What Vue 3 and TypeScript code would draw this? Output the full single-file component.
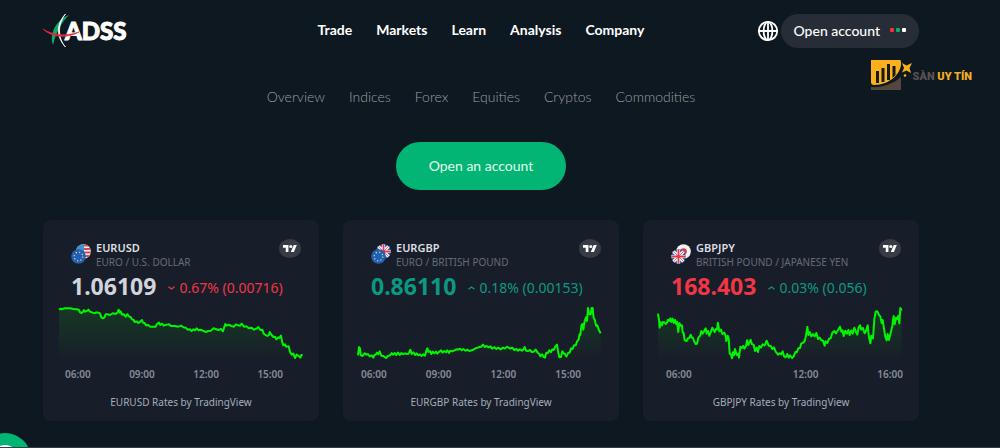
<script setup lang="ts">
type Trend = 'up' | 'down' | 'flat'

interface Tick {
  label: string
  span: number
}

interface Quote {
  symbol: string
  description: string
  front: 'eu' | 'gb'
  back: 'us' | 'gb' | 'jp'
  price: string
  priceTrend: Trend
  change: string
  changeTrend: Trend
  ticks: Tick[]
  points: string
}

const mainNav: string[] = ['Trade', 'Markets', 'Learn', 'Analysis', 'Company']
const marketNav: string[] = ['Overview', 'Indices', 'Forex', 'Equities', 'Cryptos', 'Commodities']

const quotes: Quote[] = [
  {
    symbol: 'EURUSD',
    description: 'EURO / U.S. DOLLAR',
    front: 'eu',
    back: 'us',
    price: '1.06109',
    priceTrend: 'flat',
    change: '0.67% (0.00716)',
    changeTrend: 'down',
    ticks: [
      { label: '06:00', span: 3 },
      { label: '09:00', span: 3 },
      { label: '12:00', span: 3 },
      { label: '15:00', span: 0 },
    ],
    points:
      '57,44 62,41 66,43 72,40 90,40 100,42 112,43 117,45 120,52 125,54 129,50 132,45 135,50 140,48 145,44 150,50 158,53 165,54 172,52 180,55 184,67 189,70 193,68 197,58 204,58 210,60 218,55 226,57 232,53 236,44 239,53 242,49 246,59 252,58 257,65 262,57 266,64 272,66 276,73 281,75 284,81 290,79 295,84 301,80 306,75 309,83 314,84 318,91 325,90 330,95 347,95 351,87 357,83 361,90 366,86 371,92 380,89 388,88 393,93 405,93 415,95 424,92 430,97 437,98 443,104 450,103 455,108 460,103 465,106 470,100 476,106 483,104 490,108 498,111 505,108 513,107 520,100 527,102 535,105 543,102 549,109 552,99 556,87 560,92 566,89 574,93 582,95 588,88 594,91 600,92 605,86 612,95 620,94 626,100 635,98 642,104 649,101 655,96 661,105 667,104 671,116 677,120 682,123 687,120 689,111 695,120 700,126 705,125 709,133 715,127 718,129 723,122 726,139 730,151 735,148 738,155 746,154 750,171 755,179 760,176 765,189 770,179 776,183 781,188 784,180 788,180',
  },
  {
    symbol: 'EURGBP',
    description: 'EURO / BRITISH POUND',
    front: 'eu',
    back: 'gb',
    price: '0.86110',
    priceTrend: 'up',
    change: '0.18% (0.00153)',
    changeTrend: 'up',
    ticks: [
      { label: '06:00', span: 3 },
      { label: '09:00', span: 3 },
      { label: '12:00', span: 3 },
      { label: '15:00', span: 0 },
    ],
    points:
      '54,181 57,156 60,160 62,180 68,183 74,175 80,179 84,177 89,184 95,181 100,188 103,180 108,178 111,173 115,178 119,169 124,182 130,183 138,189 144,183 150,181 155,174 159,179 164,174 169,180 174,173 179,180 184,174 189,178 195,175 200,177 206,176 211,164 215,177 220,172 225,180 230,175 235,181 240,178 244,183 250,178 255,182 259,167 262,160 265,171 270,168 274,177 278,170 283,175 288,170 292,176 299,169 303,166 308,173 313,168 318,172 322,166 327,174 331,167 337,169 343,166 349,163 354,164 360,161 365,166 370,162 376,167 382,164 388,168 395,166 402,163 408,159 413,158 419,156 424,155 429,149 434,156 440,153 446,157 451,154 456,161 463,157 469,162 475,158 482,163 489,158 495,161 501,155 507,159 511,161 517,158 523,165 529,162 534,167 540,163 546,167 550,164 554,156 558,167 564,168 570,165 575,171 581,170 587,164 593,173 598,177 601,184 606,178 611,186 615,188 619,173 623,175 628,166 633,171 637,163 641,165 646,154 651,149 654,168 658,187 663,186 667,169 671,175 675,177 679,185 685,173 689,173 693,160 698,162 702,151 707,151 711,140 716,133 719,117 721,120 724,93 727,87 730,104 734,78 738,67 741,78 744,39 747,57 752,58 755,39 758,39 761,69 765,76 768,92 772,91 777,106 782,115',
  },
  {
    symbol: 'GBPJPY',
    description: 'BRITISH POUND / JAPANESE YEN',
    front: 'gb',
    back: 'jp',
    price: '168.403',
    priceTrend: 'down',
    change: '0.03% (0.056)',
    changeTrend: 'up',
    ticks: [
      { label: '06:00', span: 6 },
      { label: '12:00', span: 4 },
      { label: '16:00', span: 0 },
    ],
    points:
      '54,56 57,75 59,98 62,82 66,91 69,81 73,82 77,87 81,83 84,74 87,78 91,70 94,81 98,71 101,84 105,75 108,87 111,80 115,111 118,84 122,92 126,91 128,112 131,114 134,136 140,138 144,130 148,129 152,119 155,127 159,129 162,138 167,147 171,146 175,128 181,121 184,108 188,116 193,107 197,100 200,116 204,108 208,122 213,109 217,98 221,106 224,111 228,102 231,103 234,83 238,109 243,104 247,117 253,113 257,124 259,138 263,122 266,130 269,176 273,179 276,190 279,172 282,181 285,162 290,180 294,177 297,188 301,155 306,159 309,153 313,161 318,153 321,136 325,150 328,144 332,134 336,148 341,149 345,168 350,158 354,171 358,153 363,158 368,148 374,151 380,137 386,152 392,153 397,162 402,157 407,170 414,179 419,175 424,178 428,169 432,184 437,187 442,177 446,188 450,181 456,189 461,184 466,171 470,172 475,160 480,159 484,145 490,143 495,136 499,115 502,95 505,120 509,111 514,124 519,117 524,124 529,114 534,132 539,128 544,136 549,137 554,152 557,139 562,144 567,131 572,130 577,113 583,108 588,115 594,105 600,95 604,110 608,106 611,123 616,107 621,116 625,105 629,120 634,106 638,116 643,98 648,111 652,119 656,96 660,91 664,104 669,99 674,115 679,105 683,91 687,127 691,145 694,122 699,130 703,73 707,50 712,49 717,60 721,64 725,84 728,75 732,101 736,126 740,136 743,117 747,135 751,118 755,101 757,92 761,63 764,88 768,68 772,72 775,62 778,85 781,39 785,47',
  },
]

function areaPoints(points: string): string {
  const pairs = points.split(' ')
  const firstX = pairs[0].split(',')[0]
  const lastX = pairs[pairs.length - 1].split(',')[0]
  return `${firstX},195 ${points} ${lastX},195`
}
</script>

<template>
  <div class="page">
    <header class="header">
      <a href="#" class="brand" aria-label="ADSS">
        <svg width="84" height="34" viewBox="0 0 84 34" aria-hidden="true">
          <path d="M26 1C19 8 13 18 10 31C6 20 13 6 26 1Z" fill="#12a56c" />
          <path d="M22.500 0C13 10 13 23 22.500 33C14.500 24 14.500 10 22.500 0Z" fill="#fff" stroke="#fff" stroke-width=".8" />
          <text x="22" y="26" class="brand-text">ADSS</text>
          <path d="M0 15C10 21.500 23 22.500 36 18C25 24.500 9 24 0 15Z" fill="#e4293a" stroke="#e4293a" stroke-width=".6" />
        </svg>
      </a>
      <nav class="main-nav" aria-label="Main">
        <a v-for="item in mainNav" :key="item" href="#">{{ item }}</a>
      </nav>
      <div class="actions">
        <button type="button" class="globe" aria-label="Language">
          <svg width="22" height="22" viewBox="0 0 22 22" fill="none" stroke="#fff" stroke-width="1.8">
            <circle cx="11" cy="11" r="9.200" />
            <ellipse cx="11" cy="11" rx="4.400" ry="9.200" />
            <path d="M11 2V20M2 11H20" />
          </svg>
        </button>
        <button type="button" class="pill">
          Open account
          <span class="dots"><i class="red"></i><i class="green"></i><i class="white"></i></span>
        </button>
      </div>
    </header>

    <div class="watermark">
      <svg width="42" height="32" viewBox="0 0 42 32" aria-hidden="true">
        <path d="M0 30V27C13 28 23 23 30 17V30Z" fill="#54463f" />
        <path d="M0 0H29Q30 0 30 2C31 13 19 25 3 25Q0 25 0 22Z" fill="#fbb11b" />
        <path d="M5 11H8V23H5ZM10.500 8H13.500V22H10.500ZM16 4H19V20H16ZM21.500 6H24.500V15L21.500 18Z" fill="#17181a" />
        <path d="M31 3L35.500 5.500L41 3L38.500 8L40 13L35.500 10.500L31 12.500L33 8Z" fill="#fbb11b" />
        <circle cx="34" cy="15.500" r="1.300" fill="#fbb11b" />
      </svg>
      <span><span class="muted">SÀN</span> UY TÍN</span>
    </div>

    <main>
      <nav class="market-nav" aria-label="Markets">
        <a v-for="item in marketNav" :key="item" href="#">{{ item }}</a>
      </nav>

      <a href="#" class="cta">Open an account</a>

      <section class="cards">
        <article v-for="q in quotes" :key="q.symbol" class="card">
          <div class="card-head">
            <svg class="flags" width="20" height="20" viewBox="0 0 20 20" aria-hidden="true">
              <defs>
                <clipPath :id="`back-${q.symbol}`"><circle cx="12.500" cy="7.500" r="7.300" /></clipPath>
                <clipPath :id="`front-${q.symbol}`"><circle cx="7.500" cy="12.500" r="7.300" /></clipPath>
              </defs>
              <g :clip-path="`url(#back-${q.symbol})`">
                <template v-if="q.back === 'us'">
                  <rect x="5" width="15" height="15" fill="#f2f2f4" />
                  <path d="M5 1.500H20M5 5H20M5 8.500H20M5 12H20" stroke="#e0484f" stroke-width="1.800" />
                  <rect x="5" width="8" height="8" fill="#3f8fd6" />
                </template>
                <template v-else-if="q.back === 'gb'">
                  <rect x="5" width="15" height="15" fill="#2a62b8" />
                  <path d="M5 0L20 15M20 0L5 15M12.500 0V15M5 7.500H20" stroke="#f4f4f6" stroke-width="3.200" />
                  <path d="M5 0L20 15M20 0L5 15" stroke="#dc4850" stroke-width=".8" />
                  <path d="M12.500 0V15M5 7.500H20" stroke="#dc3c46" stroke-width="1.800" />
                </template>
                <template v-else>
                  <rect x="5" width="15" height="15" fill="#f3f3f6" />
                  <circle cx="12.500" cy="7.500" r="3.300" fill="#dc3c46" />
                </template>
              </g>
              <g :clip-path="`url(#front-${q.symbol})`">
                <template v-if="q.front === 'eu'">
                  <rect y="5" width="15" height="15" fill="#1f5fb6" />
                  <circle cx="7.500" cy="12.500" r="4.300" fill="none" stroke="#d9cf86" stroke-width="1.300" stroke-dasharray="1.300 2.077" />
                </template>
                <template v-else>
                  <rect y="5" width="15" height="15" fill="#2a62b8" />
                  <path d="M0 5L15 20M15 5L0 20M7.500 5V20M0 12.500H15" stroke="#f4f4f6" stroke-width="3.200" />
                  <path d="M0 5L15 20M15 5L0 20" stroke="#dc4850" stroke-width=".8" />
                  <path d="M7.500 5V20M0 12.500H15" stroke="#dc3c46" stroke-width="1.800" />
                </template>
              </g>
            </svg>
            <div class="names">
              <h2>{{ q.symbol }}</h2>
              <p>{{ q.description }}</p>
            </div>
            <a href="#" class="tv" aria-label="TradingView">
              <svg width="14" height="7" viewBox="0 4 36 18" fill="#fff">
                <path d="M14 22H7V11H0V4H14ZM28 22H20L27.500 4H35.500Z" />
                <circle cx="20" cy="8" r="4" />
              </svg>
            </a>
          </div>

          <div class="values">
            <strong :class="['price', q.priceTrend]">{{ q.price }}</strong>
            <span :class="['change', q.changeTrend]">
              <svg width="7" height="4" viewBox="0 0 7 4" fill="none" stroke="currentColor" stroke-width="1.200">
                <path :d="q.changeTrend === 'up' ? 'M.5 3.300L3.500 1L6.500 3.300' : 'M.5 .7L3.500 3L6.500 .7'" />
              </svg>
              {{ q.change }}
            </span>
          </div>

          <svg class="chart" viewBox="9 21 828 192" preserveAspectRatio="none" role="img" :aria-label="`${q.symbol} chart`">
            <defs>
              <linearGradient :id="`fill-${q.symbol}`" gradientUnits="userSpaceOnUse" x1="0" y1="39" x2="0" y2="195">
                <stop offset="0" stop-color="#00ff00" stop-opacity=".12" />
                <stop offset="1" stop-color="#00ff00" stop-opacity="0" />
              </linearGradient>
            </defs>
            <polygon :points="areaPoints(q.points)" :fill="`url(#fill-${q.symbol})`" />
            <polyline :points="q.points" class="line" />
          </svg>

          <ol :class="['ticks', q.symbol.toLowerCase()]">
            <li v-for="t in q.ticks" :key="t.label" :style="{ flexGrow: t.span }">{{ t.label }}</li>
          </ol>
          <a href="#" class="caption">{{ q.symbol }} Rates by TradingView</a>
        </article>
      </section>
    </main>

    <button type="button" class="chat" aria-label="Chat">
      <svg width="30" height="30" viewBox="0 0 30 30" fill="none" stroke="#fff" stroke-width="2">
        <circle cx="15" cy="15" r="13" />
      </svg>
    </button>
  </div>
</template>

<style>
body {
  margin: 0;
  background: #0e1820;
}
</style>

<style scoped>
.page {
  position: relative;
  box-sizing: border-box;
  min-height: 100vh;
  padding: 14px 81px 24px 43px;
  overflow: hidden;
  border-bottom: 1px solid #343c44;
  background: #0e1820;
  color: #fff;
  font-family: Lato, "Liberation Sans", sans-serif;
}

a {
  color: inherit;
  text-decoration: none;
}

button {
  padding: 0;
  border: 0;
  background: none;
  color: inherit;
  font: inherit;
  cursor: pointer;
}

.header {
  display: grid;
  grid-template-columns: 1fr auto 1fr;
  align-items: center;
}

.brand svg {
  display: block;
}

.brand-text {
  fill: #fff;
  stroke: #fff;
  stroke-width: 1px;
  font-size: 24px;
  font-weight: 900;
}

.main-nav {
  display: flex;
  gap: 24px;
  padding-bottom: 2px;
  font-size: 14px;
  font-weight: 700;
  line-height: 18px;
}

.actions {
  display: flex;
  align-items: center;
  justify-content: flex-end;
  gap: 2px;
}

.globe svg {
  display: block;
}

.pill {
  display: flex;
  align-items: center;
  gap: 10px;
  height: 34px;
  padding: 0 13px 2px;
  border-radius: 17px;
  background: #272d36;
  font-size: 14px;
  font-weight: 500;
}

.dots {
  display: flex;
  gap: 2px;
}

.dots i {
  width: 4px;
  height: 4px;
  border-radius: 1px;
}

.red {
  background: #f0323f;
}

.green {
  background: #0aab6b;
}

.white {
  background: #fff;
}

.watermark {
  position: absolute;
  top: 60px;
  right: 28px;
  display: flex;
  align-items: center;
  color: #f3ae22;
  font-family: Roboto, "Liberation Sans", sans-serif;
  font-size: 11px;
  font-weight: 900;
}

.muted {
  color: #5a5150;
}

.market-nav {
  display: flex;
  justify-content: center;
  gap: 24px;
  margin-top: 40px;
  color: #9a9fa5;
  font-size: 14px;
  font-weight: 300;
  line-height: 18px;
}

.cta {
  display: block;
  width: fit-content;
  margin: 36px auto 0;
  padding: 0 33px;
  border-radius: 24px;
  background: #03b574;
  color: #e2f8ee;
  font-size: 14px;
  line-height: 48px;
}

.cards {
  display: grid;
  grid-template-columns: repeat(3, 1fr);
  gap: 24px;
  margin-top: 30px;
  font-family: "Noto Sans", "Open Sans", sans-serif;
}

.card {
  display: flex;
  flex-direction: column;
  padding: 19px 0 11px;
  border-radius: 8px;
  background: #181e29;
}

.card-head {
  display: flex;
  gap: 5px;
  padding: 0 18px 0 28px;
}

.flags {
  flex: none;
  margin-top: 5px;
}

.names {
  flex: 1;
  min-width: 0;
  white-space: nowrap;
}

.names h2 {
  margin: 2px 0 0;
  color: #dcdfe5;
  font-size: 11px;
  font-weight: 600;
  line-height: 14px;
}

.names p {
  margin: 0;
  color: #656b77;
  font-size: 10px;
  line-height: 14px;
}

.tv {
  display: grid;
  place-items: center;
  width: 22px;
  height: 19px;
  border-radius: 50%;
  background: #363b45;
}

.values {
  display: flex;
  align-items: center;
  gap: 12px;
  height: 33px;
  padding-left: 28px;
  white-space: nowrap;
}

.price {
  font-size: 23px;
  font-weight: 700;
}

.change {
  display: flex;
  align-items: center;
  gap: 4px;
  padding-top: 4px;
  font-size: 14px;
}

.flat {
  color: #d1d4dc;
}

.up {
  color: #0b9981;
}

.down {
  color: #f23645;
}

.chart {
  display: block;
  width: 100%;
  height: 64px;
}

.line {
  fill: none;
  stroke: #00f500;
  stroke-width: 2px;
  stroke-linejoin: round;
  vector-effect: non-scaling-stroke;
}

.ticks {
  display: flex;
  margin: 0;
  padding: 0 36px 0 22px;
  list-style: none;
  color: #868c98;
  font-size: 10px;
  font-weight: 600;
  line-height: 16px;
}

.ticks li {
  flex: 0 0 0;
}

.ticks li:last-child {
  flex: none;
}

.ticks.eurgbp {
  padding: 0 38px 0 18px;
}

.ticks.gbpjpy {
  padding: 0 16px 0 23px;
}

.caption {
  margin: 12px auto 0;
  color: #a3adba;
  font-size: 10px;
  line-height: 16px;
}

.chat {
  position: absolute;
  bottom: -38px;
  left: -21px;
  display: grid;
  place-items: center;
  width: 52px;
  height: 52px;
  border-radius: 50%;
  background: #03b574;
}
</style>
